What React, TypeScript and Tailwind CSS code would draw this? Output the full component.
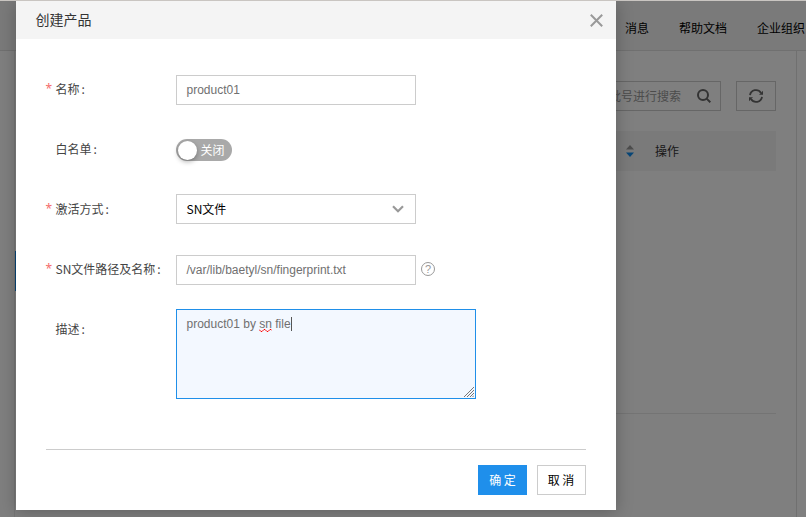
import type { ReactNode } from 'react';

function Field({ label, required, className = 'h-[30px]', labelClass = 'h-[28px]', children }: { label: string; required?: boolean; className?: string; labelClass?: string; children: ReactNode }) {
  return (
    <div className={`flex ${className}`}>
      <div className={`flex w-[130px] shrink-0 items-center self-start whitespace-nowrap text-[#444] ${labelClass}`}>
        <span className="-ml-[0.5px] w-[10px] text-xs text-[#f56c6c] font-['Noto_Sans',sans-serif]">{required ? '*' : ''}</span>
        <span>{label}</span>
        <span className="ml-[2px]">:</span>
      </div>
      {children}
    </div>
  );
}

function Page() {
  return (
    <div className="flex h-full w-full flex-col bg-white">
      <header className="flex h-[50px] shrink-0 items-center justify-end gap-[30px] border-b border-[#e1e1e1] bg-[#f4f4f4] pr-[1px] pt-[4px] whitespace-nowrap text-black">
        <span>消息</span>
        <span>帮助文档</span>
        <span>企业组织</span>
      </header>
      <div className="flex min-h-0 flex-1">
        <aside className="flex w-[15px] shrink-0 flex-col border-r border-[#ececec]" />
        <div className="w-px shrink-0 pt-[200px]">
          <div className="h-10 bg-[#108cee]" />
        </div>
        <main className="flex flex-1 flex-col pr-5 pt-[30px]">
          <div className="flex justify-end gap-[15px]">
            <div className="flex h-[30px] w-[220px] items-center justify-end border border-[#ccc] pr-[9px] text-[#999]">
              <span className="mr-[16px]">请输入名称或批号进行搜索</span>
              <svg width="14" height="14" viewBox="0 0 14 14" fill="none" stroke="#666" strokeWidth="2">
                <circle cx="6" cy="6" r="5" />
                <path d="m9.6 9.6 3.7 3.7" />
              </svg>
            </div>
            <div className="flex h-[30px] w-10 items-center justify-center border border-[#ccc]">
              <svg width="14" height="14" viewBox="0 0 14 14" fill="none" stroke="#666" strokeWidth="1.8">
                <path d="M1 6.2A6 6 0 0 1 12 3.9M13 7.8A6 6 0 0 1 2 10.1" />
                <path d="M14 1.8v4H10zM0 12.2v-4h4z" fill="#666" stroke="none" />
              </svg>
            </div>
          </div>
          <div className="mt-5 flex h-10 items-center bg-[#f5f5f5] pl-[610px] text-[#333]">
            <svg width="8" height="14" viewBox="0 0 8 14">
              <path d="M0 5.5 4 1l4 4.5z" fill="#999" />
              <path d="M0 8.5h8L4 13z" fill="#108cee" />
            </svg>
            <span className="ml-[21px]">操作</span>
          </div>
          <div className="mt-[242px] h-px bg-[#e8e8e8]" />
        </main>
        <div className="w-[10px] shrink-0 border-l border-[#e1e1e1]" />
      </div>
    </div>
  );
}

function Dialog() {
  return (
    <section className="absolute left-4 top-0 flex h-[509px] w-[600px] flex-col bg-white shadow-[0_2px_16px_rgba(0,0,0,0.25)]">
      <header className="flex h-[38px] items-center justify-between bg-[#f4f4f4] pl-[19.5px] pr-[13.5px] text-sm text-[#333]">
        <span className="-mt-[2px]">创建产品</span>
        <svg width="13" height="13" viewBox="0 0 13 13" fill="none" stroke="#999" strokeWidth="2">
          <path d="m.8.8 11.4 11.4M12.2.8.8 12.2" />
        </svg>
      </header>
      <div className="flex flex-col px-[30px] pt-9">
        <Field label="名称" required>
          <div className="flex w-60 items-center border border-[#ccc] pl-[9.5px] font-['Liberation_Sans',sans-serif] text-[#707070]">product01</div>
        </Field>
        <Field label="白名单" className="mt-[30px] h-[30px]">
          <div className="mt-[4px] flex h-[22px] w-14 items-center rounded-full bg-[#a9a9a9] pl-[1.5px] text-white">
            <div className="h-[19px] w-[19px] rounded-full bg-white shadow-[0_2px_5px_rgba(0,0,0,0.3)]" />
            <span className="ml-[4px]">关闭</span>
          </div>
        </Field>
        <Field label="激活方式" required className="mt-[29px] h-[30px]" labelClass="h-[30px]">
          <div className="flex w-60 items-center justify-between border border-[#ccc] pl-[9.5px] pr-[11px] text-black">
            <span>SN文件</span>
            <svg width="12" height="8" viewBox="0 0 12 8" fill="none" stroke="#999" strokeWidth="2.2">
              <path d="m1 1.2 5 5 5-5" />
            </svg>
          </div>
        </Field>
        <Field label="SN文件路径及名称" required className="mt-[31px] h-[30px]">
          <div className="flex w-60 items-center border border-[#ccc] pl-[9.5px] font-['Liberation_Sans',sans-serif] text-[#707070]">/var/lib/baetyl/sn/fingerprint.txt</div>
          <div className="ml-[5px] mt-[7px] flex h-[14px] w-[14px] items-center justify-center rounded-full border border-[#999] font-['Liberation_Sans',sans-serif] text-[11px] leading-none text-[#999]">?</div>
        </Field>
        <div className="mt-6 flex h-[90px]">
          <div className="flex h-[40px] w-[130px] items-center pl-[9.5px] text-[#444]">
            <span>描述</span>
            <span className="ml-[2px]">:</span>
          </div>
          <div className="flex w-[300px] flex-col justify-between border border-[#1f8fe9] bg-[#f3f8ff] pl-[9.5px] pt-[6px] font-['Liberation_Sans',sans-serif] text-[#707070]">
            <div className="flex h-4 items-center whitespace-pre">
              <span>product01 by </span>
              <span className="relative">sn
                <svg className="absolute left-0 top-[13px]" width="13" height="3" viewBox="0 0 13 3" fill="none" stroke="#f00" strokeWidth="1">
                  <path d="M0 .5 2 2.5h1L5 .5h1l2 2h1l2-2h1l1 1" />
                </svg>
              </span>
              <span> file</span>
              <span className="h-[14px] w-px bg-[#555]" />
            </div>
            <svg className="mb-px mr-px self-end" width="10" height="10" viewBox="0 0 10 10" fill="none" stroke="#777" strokeWidth="1">
              <path d="M0 10 10 0M3 10l7-7M6 10l4-4M8.5 10 10 8.5" />
            </svg>
          </div>
        </div>
        <div className="mt-[50px] h-px bg-[#ccc]" />
        <div className="mt-[15px] flex justify-end gap-[10px]">
          <button className="flex h-[30px] w-[49px] items-center justify-center whitespace-pre bg-[#1f8feb] text-white">确 定</button>
          <button className="flex h-[30px] w-[49px] items-center justify-center whitespace-pre border border-[#ccc] bg-white pr-px text-black">取 消</button>
        </div>
      </div>
    </section>
  );
}

export default function App() {
  return (
    <div className="flex h-[517px] w-[806px] flex-col overflow-hidden bg-[#c9c5c1] pt-px font-['Noto_Sans_CJK_SC',sans-serif] text-xs">
      <div className="relative h-[516px]">
        <Page />
        <div className="absolute inset-0 overflow-hidden bg-black/50">
          <Dialog />
        </div>
      </div>
    </div>
  );
}
